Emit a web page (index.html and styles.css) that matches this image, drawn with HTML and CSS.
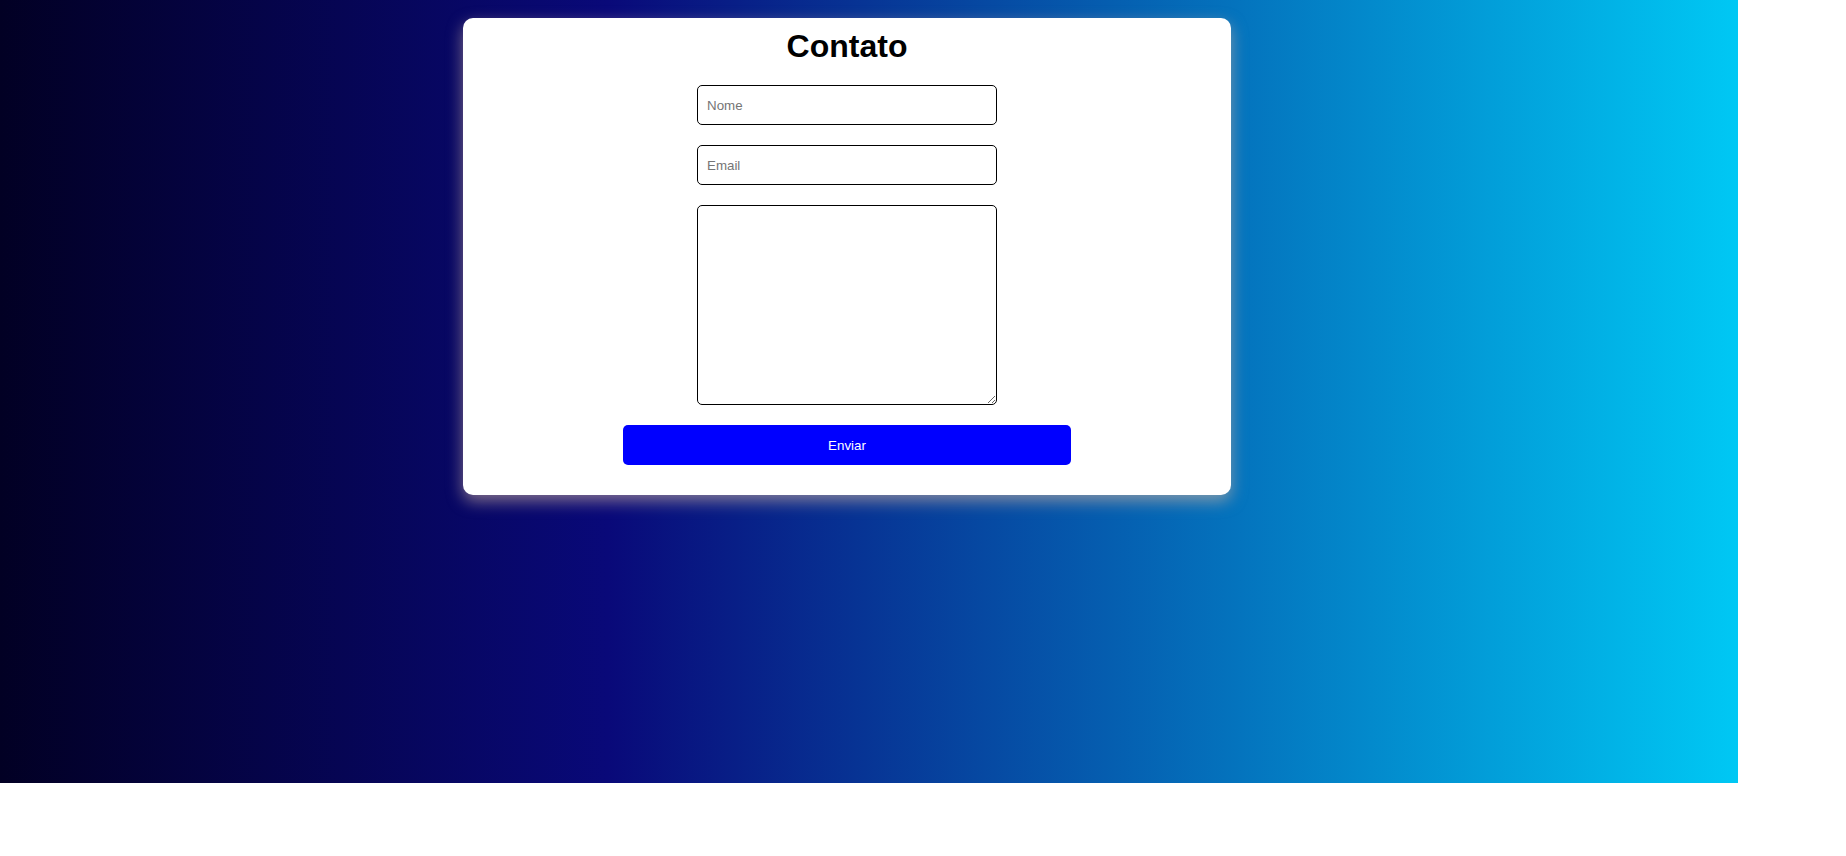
FILE: index.html
```html
<!DOCTYPE html>
<html lang="pt">
<head>
<meta charset="utf-8">
<title>Contato</title>
<link rel="stylesheet" href="styles.css">
</head>
<body>
<section class="hero">
  <div class="card">
    <h1 class="title">Contato</h1>
    <form class="form">
      <input class="field" type="text" placeholder="Nome">
      <input class="field" type="email" placeholder="Email">
      <textarea class="field area"></textarea>
      <button class="send" type="button">Enviar</button>
    </form>
  </div>
</section>
</body>
</html>
```

FILE: styles.css
```css
html, body {
  margin: 0;
  padding: 0;
  background: #ffffff;
}

body {
  font-family: "Liberation Sans", Arial, sans-serif;
}

.hero {
  width: 1738px;
  height: 783px;
  box-sizing: border-box;
  padding: 18px 0 0 463px;
  background: linear-gradient(90deg, #020024 0%, #090979 35%, #00c8f4 100%);
}

.card {
  width: 768px;
  box-sizing: border-box;
  padding: 10px 0 30px;
  background: #ffffff;
  border-radius: 10px;
  box-shadow: 0 6px 16px rgba(210, 180, 160, 0.6);
  display: flex;
  flex-direction: column;
  align-items: center;
  gap: 20px;
}

.title {
  margin: 0;
  font-size: 32px;
  font-weight: bold;
  line-height: 37px;
  color: #000000;
}

.form {
  display: flex;
  flex-direction: column;
  align-items: center;
  gap: 20px;
}

.field {
  width: 300px;
  height: 40px;
  box-sizing: border-box;
  padding: 0 9px;
  border: 1px solid #000000;
  border-radius: 5px;
  font-family: "Liberation Sans", Arial, sans-serif;
  font-size: 13.333px;
  color: #000000;
  background: #ffffff;
  outline: none;
}

.field::placeholder {
  color: #757575;
}

.area {
  height: 200px;
  padding: 9px;
  margin: 0;
  display: block;
}

.send {
  width: 448px;
  height: 40px;
  border: none;
  border-radius: 5px;
  background: #0000ff;
  color: #ffffff;
  font-family: "Liberation Sans", Arial, sans-serif;
  font-size: 13.333px;
  cursor: pointer;
}
```
